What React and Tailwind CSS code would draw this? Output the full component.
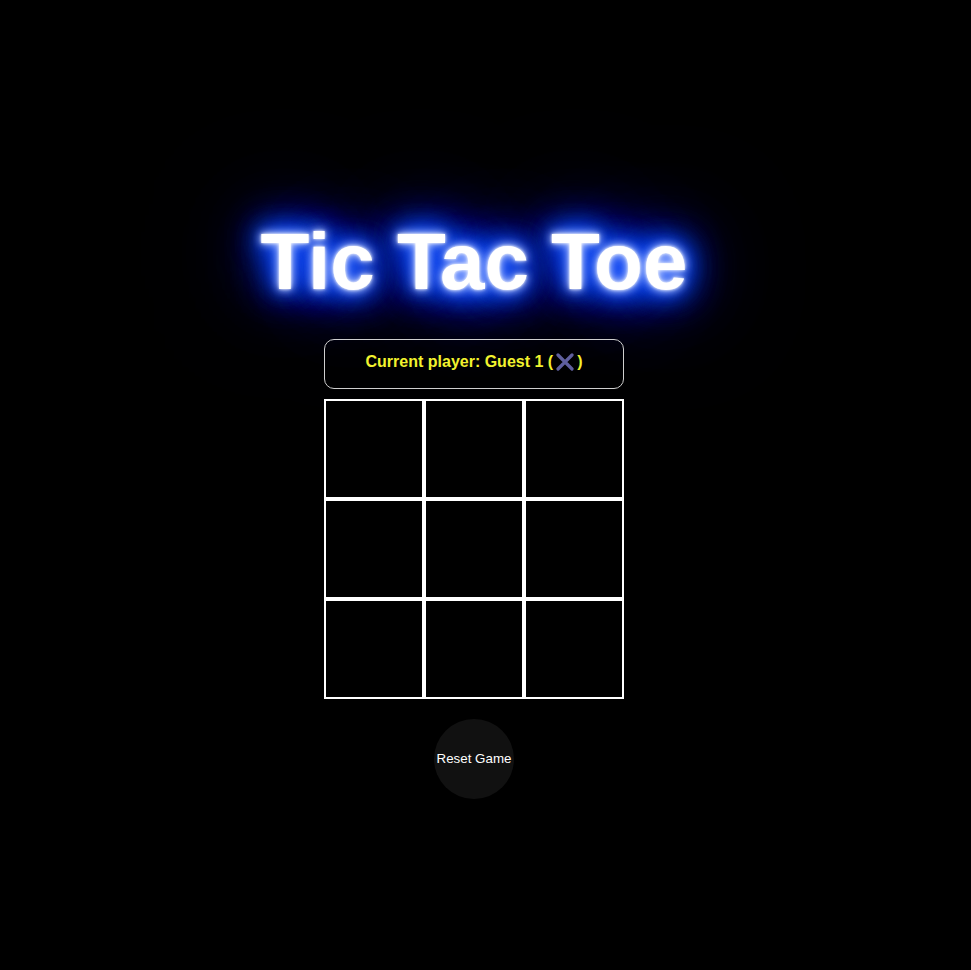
import React from "react";

export default function App() {
  const cells = Array.from({ length: 9 });
  return (
    <div className="min-h-[970px] w-full bg-black flex flex-col items-center pt-[216px] pr-[23px] font-['Liberation_Sans',Arial,sans-serif]">
      <h1
        className="text-[80px] font-bold text-white leading-[92px] m-0"
        style={{
          textShadow:
            "0 0 3px #fff, 0 0 8px #e6ecff, 0 0 14px #5a84ff, 0 0 22px #1f55ff, 0 0 30px #0047ff, 0 0 30px #0047ff, 0 0 45px #0040ff, 0 0 45px #0040ff, 0 0 65px #0036f0, 0 0 90px #0028d0, 0 0 120px #001a99",
        }}
      >
        Tic Tac Toe
      </h1>
      <div className="mt-[31px] w-[300px] h-[50px] border border-[#cfcfcf] rounded-[10px] flex items-center justify-center pb-[4px] text-[16px] font-bold text-[#f2f22e]">
        <span>Current player: Guest 1 (</span>
        <svg width="22" height="18" viewBox="0 0 22 18" className="mx-[1px]">
          <path d="M4 2 L18 16 M18 2 L4 16" stroke="#5f5f9e" strokeWidth="3.2" strokeLinecap="round" />
        </svg>
        <span>)</span>
      </div>
      <div className="mt-[10px] grid grid-cols-[repeat(3,100px)] grid-rows-[repeat(3,100px)]">
        {cells.map((_, i) => (
          <div key={i} className="w-[100px] h-[100px] border-2 border-white bg-black box-border" />
        ))}
      </div>
      <button className="mt-[20px] w-[80px] h-[80px] rounded-full bg-[#111111] text-white text-[13.33px] flex items-center justify-center">
        Reset Game
      </button>
    </div>
  );
}
